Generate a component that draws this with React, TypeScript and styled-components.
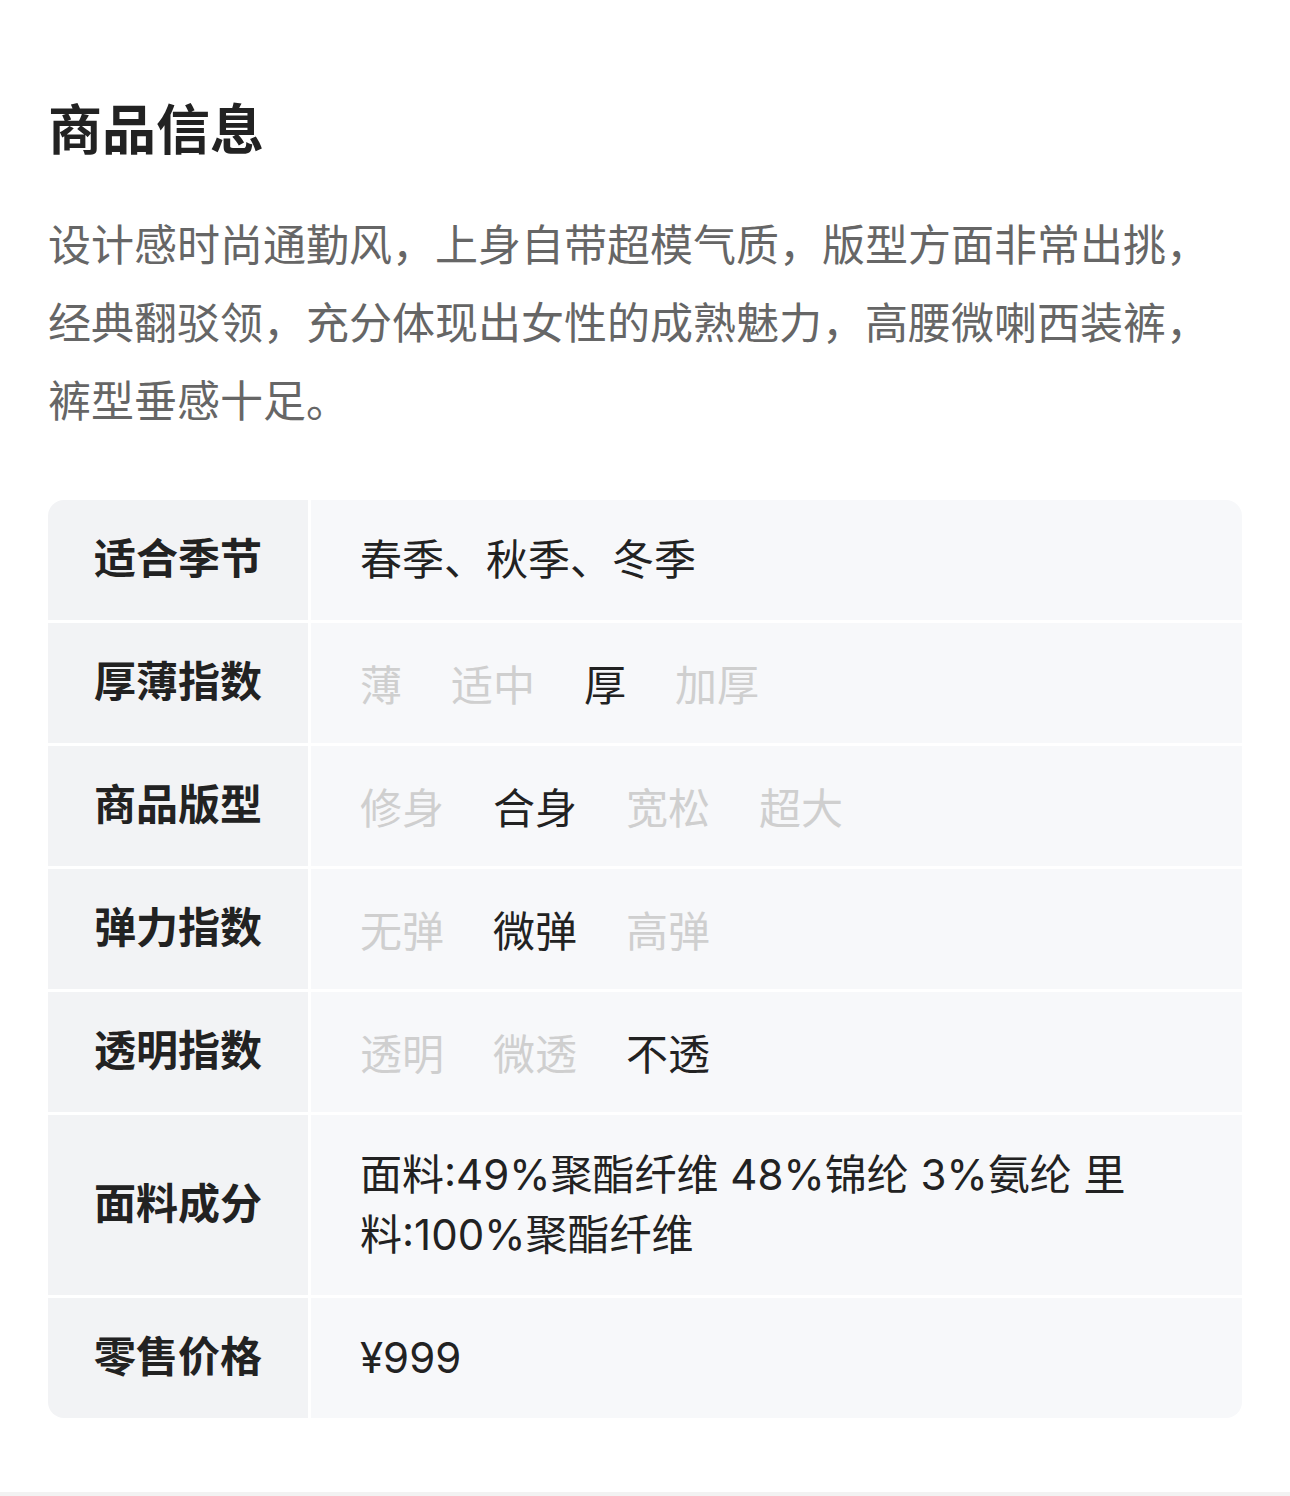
import styled, { createGlobalStyle } from "styled-components";

const GlobalStyle = createGlobalStyle`
  body {
    margin: 0;
    background: #fff;
    font-family: "Noto Sans CJK SC", "Noto Sans", sans-serif;
  }
`;

type Spec = {
  label: string;
  options?: string[];
  active?: number;
  text?: string;
  tall?: boolean;
};

const SPECS: Spec[] = [
  { label: "适合季节", text: "春季、秋季、冬季" },
  { label: "厚薄指数", options: ["薄", "适中", "厚", "加厚"], active: 2 },
  { label: "商品版型", options: ["修身", "合身", "宽松", "超大"], active: 1 },
  { label: "弹力指数", options: ["无弹", "微弹", "高弹"], active: 1 },
  { label: "透明指数", options: ["透明", "微透", "不透"], active: 2 },
  { label: "面料成分", text: "面料:49%聚酯纤维 48%锦纶 3%氨纶 里料:100%聚酯纤维", tall: true },
  { label: "零售价格", text: "¥999" },
];

export default function App() {
  return (
    <>
      <GlobalStyle />
      <Page>
        <Title>商品信息</Title>
        <Description>
          设计感时尚通勤风，上身自带超模气质，版型方面非常出挑，经典翻驳领，充分体现出女性的成熟魅力，高腰微喇西装裤，裤型垂感十足。
        </Description>
        <Table>
          {SPECS.map((spec) => (
            <Row key={spec.label} $tall={spec.tall}>
              <Label>{spec.label}</Label>
              <Value>
                {spec.options ? (
                  <Options>
                    {spec.options.map((opt, i) => (
                      <Option key={opt} $active={i === spec.active}>
                        {opt}
                      </Option>
                    ))}
                  </Options>
                ) : (
                  <ValueText>{spec.text}</ValueText>
                )}
              </Value>
            </Row>
          ))}
        </Table>
      </Page>
      <BottomBand />
    </>
  );
}

const Page = styled.div`
  padding: 89px 48px 74px;
`;
const Title = styled.h1`
  margin: 0;
  font-size: 54px;
  line-height: 76px;
  font-weight: 700;
  color: #222;
`;
const Description = styled.p`
  margin: 38px 0 0;
  font-size: 43px;
  line-height: 78px;
  color: #666;
`;
const Table = styled.div`
  margin-top: 63px;
  display: flex;
  flex-direction: column;
  gap: 3px;
  border-radius: 16px;
  overflow: hidden;
`;
const Row = styled.div<{ $tall?: boolean }>`
  display: grid;
  grid-template-columns: 260px 1fr;
  column-gap: 3px;
  height: ${(props) => (props.$tall ? "180px" : "120px")};
`;
const Label = styled.div`
  display: flex;
  align-items: center;
  justify-content: center;
  background: #f2f3f5;
  font-size: 42px;
  font-weight: 700;
  color: #222;
  padding-bottom: 10px;
`;
const Value = styled.div`
  display: flex;
  align-items: center;
  background: #f7f8fa;
  padding: 0 100px 0 49px;
`;
const ValueText = styled.div`
  font-family: Inter, "Noto Sans CJK SC", sans-serif;
  font-size: 42px;
  line-height: 60px;
  color: #222;
`;
const Options = styled.div`
  display: flex;
  gap: 49px;
  font-size: 42px;
  line-height: 60px;
`;
const Option = styled.span<{ $active?: boolean }>`
  color: ${(props) => (props.$active ? "#222" : "#cfcfcf")};
`;
const BottomBand = styled.div`
  height: 16px;
  background: #f2f2f2;
`;
